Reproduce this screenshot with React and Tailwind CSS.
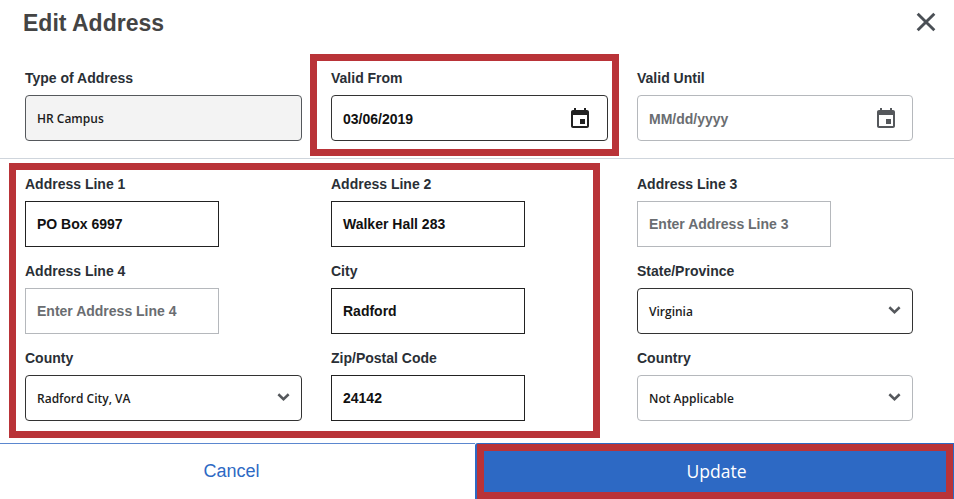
import React from 'react';

const sans = "font-['Liberation_Sans',Arial,sans-serif]";
const open = "font-['Open_Sans',sans-serif]";

function CalendarIcon({ className }) {
  return (
    <svg viewBox="0 0 24 24" className={className} fill="currentColor">
      <path d="M17 12h-5v5h5v-5zM16 1v2H8V1H6v2H5c-1.11 0-1.99.9-1.99 2L3 19c0 1.1.89 2 2 2h14c1.1 0 2-.9 2-2V5c0-1.1-.9-2-2-2h-1V1h-2zm3 18H5V8h14v11z" />
    </svg>
  );
}

function Chevron() {
  return (
    <svg viewBox="0 0 14 9" className="w-[13px] h-[8px] text-[#55585c] mb-[2px]" fill="none" stroke="currentColor" strokeWidth="2.8">
      <path d="M1.2 1.4 7 7l5.8-5.6" />
    </svg>
  );
}

function Field({ label, children }) {
  return (
    <div className="flex flex-col gap-[8px]">
      <div className={`${sans} h-[17px] text-[14px] leading-[17px] font-bold text-[#2a2f36]`}>{label}</div>
      {children}
    </div>
  );
}

function TextBox({ value, placeholder }) {
  return (
    <div
      className={`${sans} w-[194px] h-[46px] flex items-center px-[11px] text-[14px] font-bold border ${
        placeholder ? 'border-[#b5b8bc] text-[#6a6d71]' : 'border-[#222] text-[#111]'
      }`}
    >
      {value || placeholder}
    </div>
  );
}

function SelectBox({ value, muted }) {
  return (
    <div
      className={`${open} h-[46px] flex items-center justify-between pl-[11px] pr-[11px] rounded-[4px] border text-[12px] font-semibold text-[#1c1c1c] ${
        muted ? 'border-[#b5b8bc]' : 'border-[#333]'
      }`}
    >
      <span className="pt-[2px]">{value}</span>
      <Chevron />
    </div>
  );
}

function DateBox({ value, placeholder }) {
  return (
    <div
      className={`${sans} h-[46px] flex items-center justify-between pl-[11px] rounded-[4px] border text-[14px] font-bold ${
        placeholder ? 'pr-[14px] border-[#b5b8bc] text-[#6a6d71]' : 'pr-[15px] border-[#333] text-[#111]'
      }`}
    >
      <span className="pt-[2px]">{value || placeholder}</span>
      <CalendarIcon className={`w-[24px] h-[24px] mt-[1px] ${placeholder ? 'text-[#55585c]' : 'text-[#222]'}`} />
    </div>
  );
}

export default function App() {
  return (
    <div className="relative w-[954px] h-[499px] overflow-hidden bg-white">
      {/* Header */}
      <div className="h-[46px] flex items-center justify-between pl-[23px] pr-[18px]">
        <h2 className={`${sans} text-[23px] font-bold text-[#444]`}>Edit Address</h2>
        <svg viewBox="0 0 18 18" className="w-[20px] h-[20px] mb-[3px] text-[#4a4f55]" fill="none" stroke="currentColor" strokeWidth="2.6">
          <path d="M1.5 1.5l15 15M16.5 1.5l-15 15" />
        </svg>
      </div>

      {/* Type and dates */}
      <div className="grid grid-cols-[277px_277px_276px] gap-x-[29px] px-[25px] pt-[24px] pb-[17px] border-b border-[#cfd5dc]">
        <Field label="Type of Address">
          <div className={`${open} h-[46px] flex items-center px-[11px] pt-[2px] rounded-[4px] border border-[#55585c] bg-[#f3f3f3] text-[12px] font-semibold text-[#1c1c1c]`}>
            HR Campus
          </div>
        </Field>
        <Field label="Valid From">
          <DateBox value="03/06/2019" />
        </Field>
        <Field label="Valid Until">
          <DateBox placeholder="MM/dd/yyyy" />
        </Field>
      </div>

      {/* Address fields */}
      <div className="grid grid-cols-[277px_277px_276px] gap-x-[29px] gap-y-[16px] px-[25px] pt-[17px]">
        <Field label="Address Line 1"><TextBox value="PO Box 6997" /></Field>
        <Field label="Address Line 2"><TextBox value="Walker Hall 283" /></Field>
        <Field label="Address Line 3"><TextBox placeholder="Enter Address Line 3" /></Field>
        <Field label="Address Line 4"><TextBox placeholder="Enter Address Line 4" /></Field>
        <Field label="City"><TextBox value="Radford" /></Field>
        <Field label="State/Province"><SelectBox value="Virginia" /></Field>
        <Field label="County"><SelectBox value="Radford City, VA" /></Field>
        <Field label="Zip/Postal Code"><TextBox value="24142" /></Field>
        <Field label="Country"><SelectBox value="Not Applicable" muted /></Field>
      </div>

      {/* Footer */}
      <div className="flex h-[56px] mt-[22px]">
        <button className={`${sans} w-[475px] pr-[12px] border-t border-[#5b87cf] text-[18px] text-[#2d69c4]`}>Cancel</button>
        <button className={`${open} flex-1 pl-[4px] rounded-tl-[3px] bg-[#2d69c4] text-[17.5px] text-white`}>Update</button>
      </div>

      {/* Red annotation boxes drawn over the form */}
      <div className="absolute left-[310px] top-[54px] w-[309px] h-[102px] border-[7px] border-[#b93338] pointer-events-none" />
      <div className="absolute left-[9px] top-[163px] w-[591px] h-[275px] border-[7px] border-[#b93338] pointer-events-none" />
      <div className="absolute left-[477px] top-[444px] w-[476px] h-[55px] border-[7px] border-[#b93338] pointer-events-none" />
    </div>
  );
}
